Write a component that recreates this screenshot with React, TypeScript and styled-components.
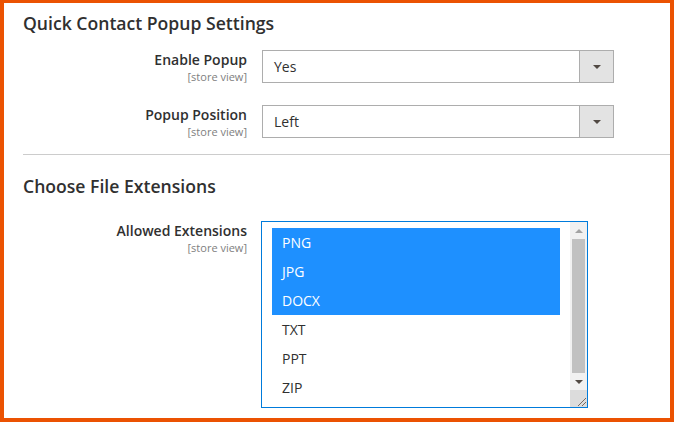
import React from "react";
import styled, { createGlobalStyle } from "styled-components";

const Global = createGlobalStyle`
  html, body { margin: 0; padding: 0; background: #fff; }
  body { font-family: "Open Sans", "Noto Sans", sans-serif; color: #303030; }
  * { box-sizing: border-box; }
`;

const Frame = styled.div`
  width: 674px;
  height: 422px;
  border-style: solid;
  border-color: #eb5202;
  border-width: 3px 4px 4px 4px;
  overflow: hidden;
  background: #fff;
`;

const Section = styled.section<{ $divider?: boolean }>`
  margin-left: 19px;
  padding-top: ${(p) => (p.$divider ? "19px" : "8px")};
  border-top: ${(p) => (p.$divider ? "1px solid #cccccc" : "none")};
`;

const Legend = styled.h2`
  margin: 0;
  font-size: 17.6px;
  line-height: 24px;
  font-weight: 600;
  color: #303030;
`;

const Fields = styled.div<{ $top: number; $bottom: number }>`
  display: flex;
  flex-direction: column;
  gap: 22px;
  padding-top: ${(p) => p.$top}px;
  padding-bottom: ${(p) => p.$bottom}px;
`;

const Row = styled.div`
  display: grid;
  grid-template-columns: 224px auto;
  column-gap: 15px;
  align-items: start;
`;

const LabelCol = styled.div<{ $top: number }>`
  display: flex;
  flex-direction: column;
  align-items: flex-end;
  text-align: right;
  padding-top: ${(p) => p.$top}px;
`;

const Label = styled.span`
  font-size: 14px;
  line-height: 20px;
  font-weight: 600;
  color: #303030;
`;

const Scope = styled.span`
  font-size: 11px;
  line-height: 13px;
  color: #808080;
`;

const Select = styled.div`
  display: flex;
  width: 352px;
  height: 33px;
  border: 1px solid #adadad;
  background: #fff;
`;

const Value = styled.div`
  flex: 1;
  display: flex;
  align-items: center;
  padding-left: 11px;
  font-size: 14px;
  color: #303030;
`;

const Toggle = styled.div`
  width: 34px;
  display: flex;
  align-items: center;
  justify-content: center;
  background: #e3e3e3;
  border-left: 1px solid #adadad;
`;

const Caret = styled.span<{ $color?: string; $up?: boolean }>`
  width: 0;
  height: 0;
  border-left: 4px solid transparent;
  border-right: 4px solid transparent;
  ${(p) =>
    p.$up
      ? `border-bottom: 4px solid ${p.$color ?? "#514943"};`
      : `border-top: 4px solid ${p.$color ?? "#514943"};`}
`;

const Multi = styled.div`
  width: 327px;
  height: 187px;
  margin-left: -1px;
  border: 1px solid #007bdb;
  display: flex;
  background: #fff;
`;

const Options = styled.div`
  flex: 1;
  padding: 6px 10px 0 10px;
  display: flex;
  flex-direction: column;
`;

const Option = styled.div<{ $selected?: boolean }>`
  height: 29px;
  display: flex;
  align-items: center;
  padding-left: 10px;
  font-size: 14px;
  background: ${(p) => (p.$selected ? "#1e90ff" : "transparent")};
  color: ${(p) => (p.$selected ? "#ffffff" : "#303030")};
`;

const ScrollBar = styled.div`
  width: 17px;
  display: flex;
  flex-direction: column;
  background: #f1f1f1;
`;

const ScrollBtn = styled.div`
  height: 17px;
  display: flex;
  align-items: center;
  justify-content: center;
`;

const Track = styled.div`
  flex: 1;
  padding: 0 2px;
  display: flex;
`;

const Thumb = styled.div`
  flex: 1;
  background: #c1c1c1;
`;

const Resizer = styled.div`
  height: 17px;
  background: #dcdcdc;
  display: flex;
  align-items: flex-end;
  justify-content: flex-end;
`;

function Dropdown({ value }: { value: string }) {
  return (
    <Select>
      <Value>{value}</Value>
      <Toggle>
        <Caret />
      </Toggle>
    </Select>
  );
}

const options = [
  { v: "PNG", s: true },
  { v: "JPG", s: true },
  { v: "DOCX", s: true },
  { v: "TXT", s: false },
  { v: "PPT", s: false },
  { v: "ZIP", s: false },
];

export default function App() {
  return (
    <>
      <Global />
      <Frame>
        <Section>
          <Legend>Quick Contact Popup Settings</Legend>
          <Fields $top={15} $bottom={16}>
            <Row>
              <LabelCol $top={0}>
                <Label>Enable Popup</Label>
                <Scope>[store view]</Scope>
              </LabelCol>
              <Dropdown value="Yes" />
            </Row>
            <Row>
              <LabelCol $top={0}>
                <Label>Popup Position</Label>
                <Scope>[store view]</Scope>
              </LabelCol>
              <Dropdown value="Left" />
            </Row>
          </Fields>
        </Section>
        <Section $divider>
          <Legend>Choose File Extensions</Legend>
          <Fields $top={23} $bottom={0}>
            <Row>
              <LabelCol $top={0}>
                <Label>Allowed Extensions</Label>
                <Scope>[store view]</Scope>
              </LabelCol>
              <Multi>
                <Options>
                  {options.map((o) => (
                    <Option key={o.v} $selected={o.s}>
                      {o.v}
                    </Option>
                  ))}
                </Options>
                <ScrollBar>
                  <ScrollBtn>
                    <Caret $up $color="#a3a3a3" />
                  </ScrollBtn>
                  <Track>
                    <Thumb />
                  </Track>
                  <ScrollBtn>
                    <Caret />
                  </ScrollBtn>
                  <Resizer>
                    <svg width="12" height="12" viewBox="0 0 12 12">
                      <path d="M11 3 L3 11 M11 7 L7 11" stroke="#7a6a60" strokeWidth="1" />
                    </svg>
                  </Resizer>
                </ScrollBar>
              </Multi>
            </Row>
          </Fields>
        </Section>
      </Frame>
    </>
  );
}
